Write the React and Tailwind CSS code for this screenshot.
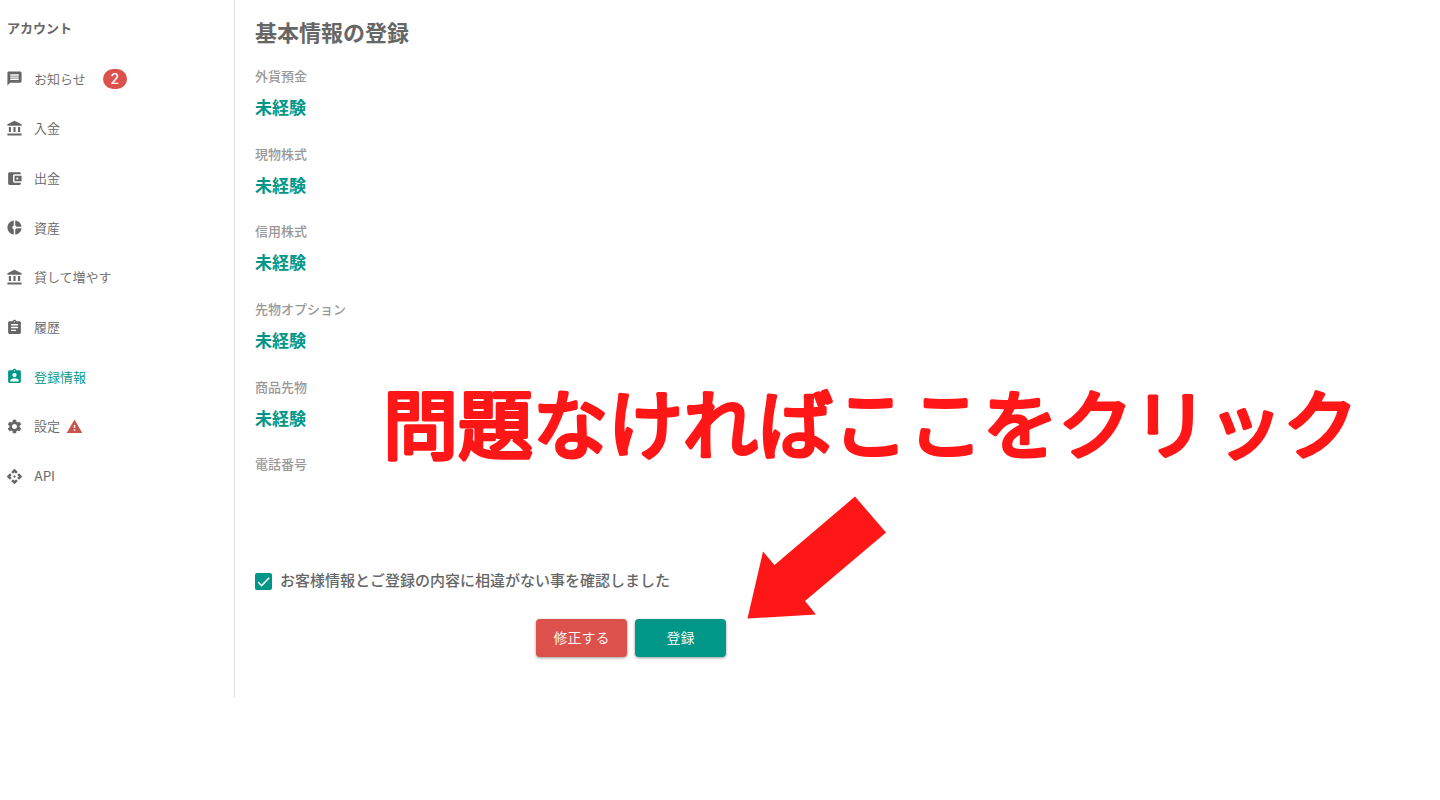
import {
  MdAccountBalance,
  MdAccountBalanceWallet,
  MdApi,
  MdAssignment,
  MdAssignmentInd,
  MdDonutSmall,
  MdMessage,
  MdSettings,
  MdWarning,
} from 'react-icons/md';

const menu = [
  { label: 'お知らせ', icon: MdMessage, badge: 2 },
  { label: '入金', icon: MdAccountBalance },
  { label: '出金', icon: MdAccountBalanceWallet },
  { label: '資産', icon: MdDonutSmall },
  { label: '貸して増やす', icon: MdAccountBalance },
  { label: '履歴', icon: MdAssignment },
  { label: '登録情報', icon: MdAssignmentInd, active: true },
  { label: '設定', icon: MdSettings, warning: true },
  { label: 'API', icon: MdApi, latin: true },
];

const fields = [
  { label: '外貨預金', value: '未経験' },
  { label: '現物株式', value: '未経験' },
  { label: '信用株式', value: '未経験' },
  { label: '先物オプション', value: '未経験' },
  { label: '商品先物', value: '未経験' },
  { label: '電話番号', value: '' },
];

function Sidebar() {
  return (
    <aside className="w-[235px] shrink-0 border-r border-[#e2e2e2] pl-1.5 pt-[18px]">
      <h2 className="pl-px text-[13px] leading-5 font-bold text-[#666]">アカウント</h2>
      <nav className="mt-4 grid h-[447px] auto-rows-fr">
        {menu.map((item) => (
          <a
            key={item.label}
            href="#"
            className={`flex items-center text-[13px] leading-5 ${item.latin ? 'font-normal' : 'font-[350]'} ${item.active ? 'text-[#009688]' : 'text-[#666]'}`}
          >
            <item.icon className="mr-[11px] size-[17px]" />
            {item.label}
            {item.badge && (
              <span className="ml-[17px] flex h-5 w-6 items-center justify-center rounded-full bg-[#dd514c] text-sm font-medium text-white">
                {item.badge}
              </span>
            )}
            {item.warning && <MdWarning className="ml-1.5 size-[17px] text-[#c9544c]" />}
          </a>
        ))}
      </nav>
    </aside>
  );
}

function Main() {
  return (
    <main className="min-w-0 flex-1 pt-[18px] pl-5">
      <h1 className="text-[22px] leading-[30px] font-bold text-[#666]">基本情報の登録</h1>

      <dl className="mt-[18px] grid h-[466px] auto-rows-fr">
        {fields.map((field) => (
          <div key={field.label}>
            <dt className="text-[13px] leading-5 font-medium text-[#999]">{field.label}</dt>
            <dd className="mt-2.5 text-[17px] leading-6 font-bold text-[#009688]">{field.value}</dd>
          </div>
        ))}
      </dl>

      <form className="mt-[39px] max-w-[471px]" onSubmit={(e) => e.preventDefault()}>
        <label className="flex items-center gap-2 text-[15px] leading-5 font-medium whitespace-nowrap text-[#666]">
          <span className="relative size-[17px] shrink-0">
            <input
              type="checkbox"
              defaultChecked
              className="peer block size-[17px] appearance-none rounded-[2px] border-2 border-[#009688] checked:bg-[#009688]"
            />
            <svg
              viewBox="0 0 17 17"
              className="pointer-events-none absolute inset-0 hidden peer-checked:block"
              fill="none"
              stroke="#fff"
              strokeWidth="1.5"
            >
              <path d="M3 9l3.600 3.600L14.200 4.800" />
            </svg>
          </span>
          お客様情報とご登録の内容に相違がない事を確認しました
        </label>

        <div className="mt-7 flex justify-end gap-2">
          <button
            type="button"
            className="h-[38px] w-[91px] rounded bg-[#dd514c] text-sm font-[350] text-white shadow-[0_1px_3px_rgba(0,0,0,0.4)]"
          >
            修正する
          </button>
          <button
            type="submit"
            className="h-[38px] w-[91px] rounded bg-[#009688] text-sm font-[350] text-white shadow-[0_1px_3px_rgba(0,0,0,0.4)]"
          >
            登録
          </button>
        </div>
      </form>
    </main>
  );
}

// Hand-drawn style note and arrow pointing at the submit button
function Callout() {
  return (
    <svg
      viewBox="0 0 980 250"
      className="pointer-events-none absolute top-[376px] left-[383px] w-[980px]"
      fill="#ff1717"
    >
      <text
        x="0"
        y="77"
        className="text-[75px] font-normal"
        stroke="#ff1717"
        strokeWidth="4"
        strokeLinejoin="round"
      >
        問題なければここをクリック
      </text>
      <path d="M472 120.500l31 36-81 68.500 11 13.500-68.500 4 15.500-67 11.500 13.500z" />
    </svg>
  );
}

export default function App() {
  return (
    <div className="relative min-h-screen bg-white font-['Inter','Noto_Sans_CJK_JP',sans-serif]">
      <div className="flex min-h-[698px]">
        <Sidebar />
        <Main />
      </div>
      <Callout />
    </div>
  );
}
